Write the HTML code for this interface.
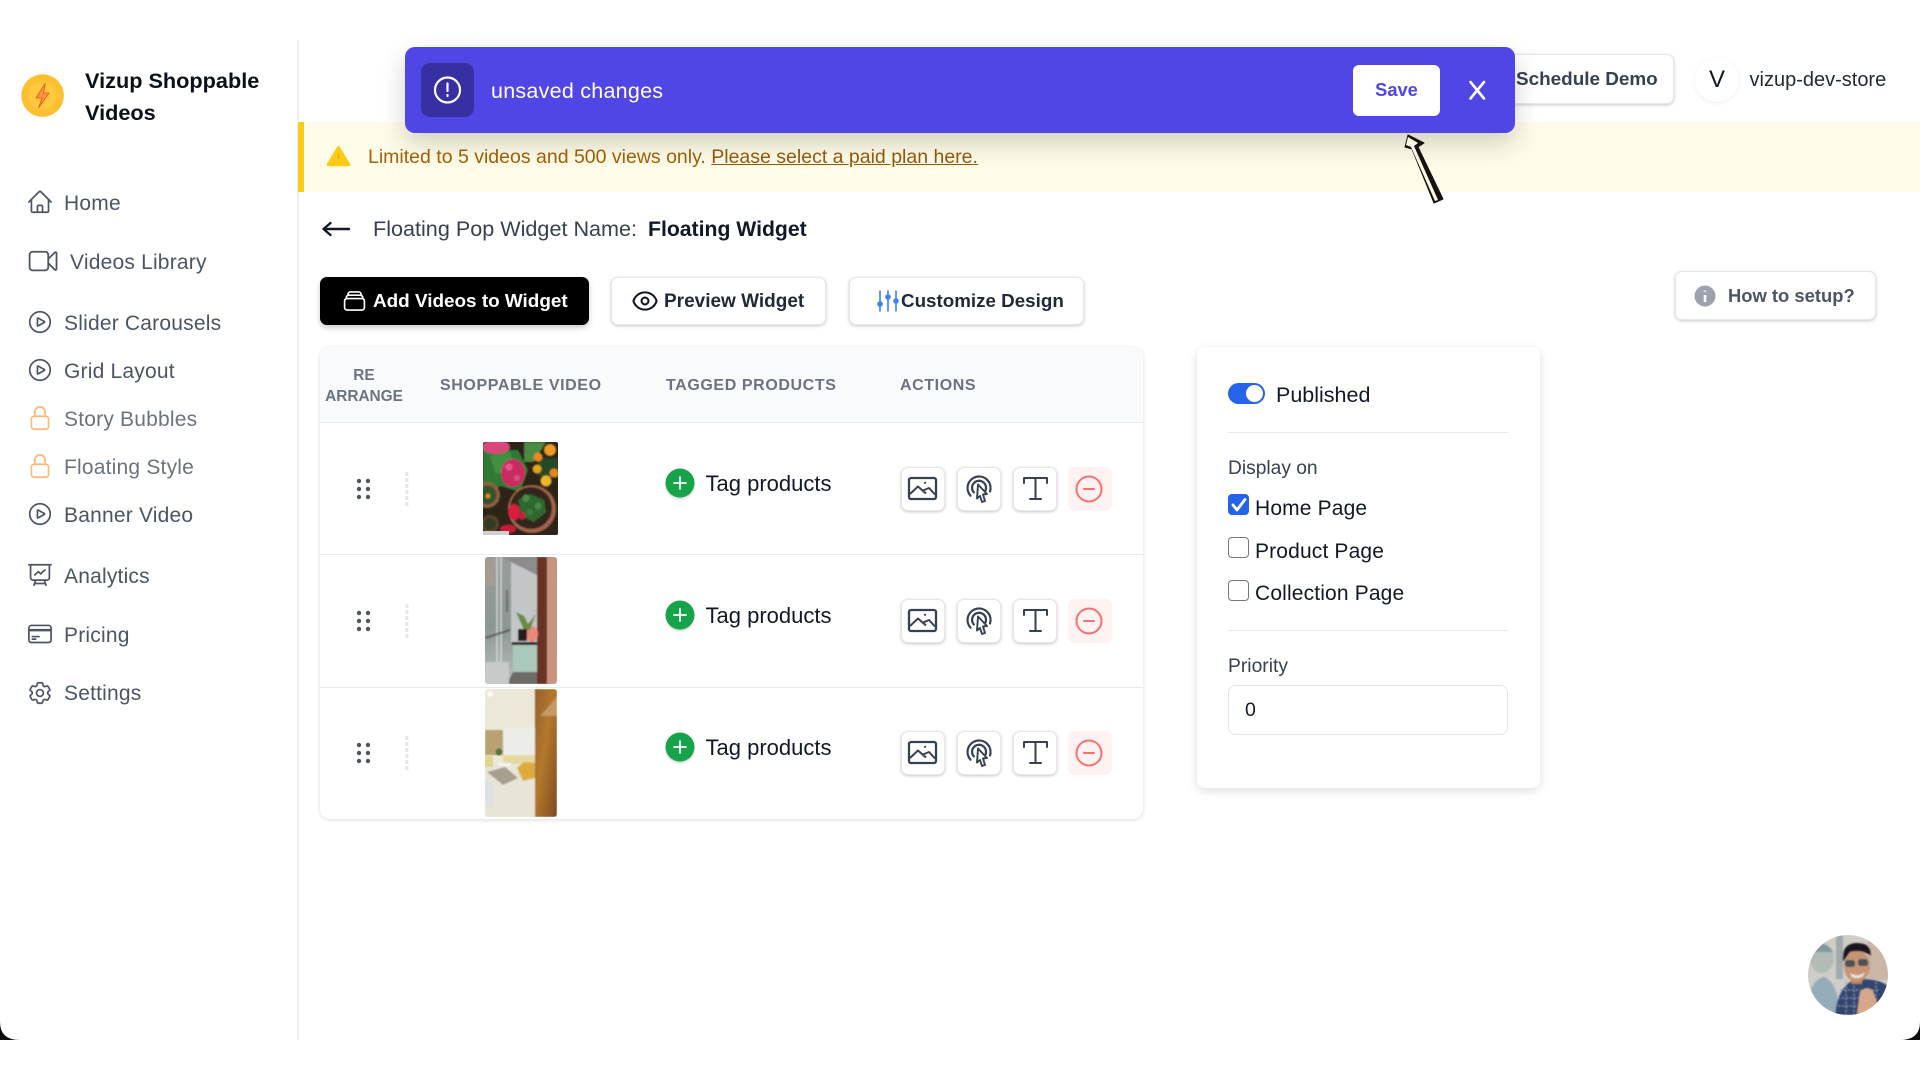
<!DOCTYPE html>
<html><head><meta charset="utf-8"><title>Vizup</title>
<style>
*{box-sizing:border-box;margin:0;padding:0}
html,body{width:1920px;height:1080px;overflow:hidden;background:#fff;font-family:"Liberation Sans",sans-serif}
body{filter:blur(.35px)}
.t{position:absolute;white-space:nowrap;line-height:30px;height:30px}
.nav{font-size:21px;color:#4b5563;left:64px;letter-spacing:.2px}
.b{position:absolute;background:#fff;border-radius:7px;border:1px solid #e5e7eb;box-shadow:0 1px 3px rgba(0,0,0,.22)}
.th{font-size:16px;font-weight:bold;color:#6b7280;letter-spacing:.6px}
.tag{font-size:22px;color:#111827;left:705.5px}
.ln{position:absolute;background:#e9eaec;height:1px}
.ck{position:absolute;left:1228px;width:21px;height:21px;border:1.5px solid #767676;border-radius:4px;background:#fff}
.lb{font-size:21px;color:#111827;left:1255px;letter-spacing:.15px}
.h{font-size:19px;font-weight:bold;color:#1f2937}
svg{position:absolute;left:0;top:0}
</style></head><body>

<div style="position:absolute;left:297px;top:40px;width:1.5px;height:1000px;background:#eeeff1"></div>
<div style="position:absolute;left:298px;top:122px;width:1622px;height:70px;background:#fefce8;border-left:6px solid #facc15"></div>

<div class="t" style="left:85px;top:65px;font-size:21.7px;font-weight:bold;color:#0b0f19;line-height:32px;height:64px">Vizup Shoppable<br>Videos</div>
<div class="t nav" style="top:188.500px">Home</div>
<div class="t nav" style="top:247.500px;left:70px">Videos Library</div>
<div class="t nav" style="top:308.500px">Slider Carousels</div>
<div class="t nav" style="top:356.500px">Grid Layout</div>
<div class="t nav" style="top:404.500px;color:#6b7280">Story Bubbles</div>
<div class="t nav" style="top:452.500px;color:#6b7280">Floating Style</div>
<div class="t nav" style="top:500.500px">Banner Video</div>
<div class="t nav" style="top:561.500px">Analytics</div>
<div class="t nav" style="top:620.500px">Pricing</div>
<div class="t nav" style="top:678.500px">Settings</div>

<div class="t" style="left:368px;top:142px;font-size:19.5px;color:#a16207">Limited to 5 videos and 500 views only. <span style="text-decoration:underline;color:#97590c">Please select a paid plan here.</span></div>

<div class="b" style="left:1480px;top:54px;width:194px;height:50px"></div>
<div class="t h" style="left:1516px;top:65px;font-size:18.9px;color:#374151">Schedule Demo</div>
<div style="position:absolute;left:1695px;top:58px;width:44px;height:44px;border-radius:50%;background:#fff;box-shadow:0 1px 4px rgba(0,0,0,.08)"></div>
<div class="t" style="left:1709px;top:65px;font-size:24px;color:#111827">V</div>
<div class="t" style="left:1749.500px;top:65px;font-size:20px;color:#1f2937">vizup-dev-store</div>

<div class="t" style="left:373px;top:214px;font-size:21.6px;color:#374151">Floating Pop Widget Name:</div>
<div class="t" style="left:648px;top:215px;font-size:21.2px;font-weight:bold;color:#111827">Floating Widget</div>

<div style="position:absolute;left:320px;top:277px;width:269px;height:48px;border-radius:7px;background:#000;box-shadow:0 3px 6px rgba(0,0,0,.2)"></div>
<div class="t" style="left:373px;top:287px;font-size:18.9px;font-weight:bold;color:#fff">Add Videos to Widget</div>
<div class="b" style="left:611px;top:277px;width:215px;height:48px"></div>
<div class="t h" style="left:664px;top:287px">Preview Widget</div>
<div class="b" style="left:849px;top:277px;width:235px;height:48px"></div>
<div class="t h" style="left:901px;top:286px;font-size:18.8px">Customize Design</div>
<div class="b" style="left:1675px;top:271px;width:201px;height:49px"></div>
<div class="t" style="left:1728px;top:281px;font-size:18.4px;color:#4b5563;font-weight:bold">How to setup?</div>

<!-- table -->
<div style="position:absolute;left:320px;top:347px;width:823px;height:472px;border-radius:10px;background:#fff;box-shadow:0 1px 4px rgba(0,0,0,.14);overflow:hidden">
  <div style="height:76px;background:#f9fafb;border-bottom:1.500px solid #e9eaec"></div>
</div>
<div class="ln" style="left:320px;top:554px;width:823px"></div>
<div class="ln" style="left:320px;top:687px;width:823px"></div>
<div class="t th" style="left:320px;width:88px;text-align:center;top:361px;font-size:15.4px;letter-spacing:0">RE</div>
<div class="t th" style="left:320px;width:88px;text-align:center;top:382px;font-size:15.4px;letter-spacing:0">ARRANGE</div>
<div class="t th" style="left:440px;top:371px">SHOPPABLE VIDEO</div>
<div class="t th" style="left:666px;top:371px">TAGGED PRODUCTS</div>
<div class="t th" style="left:900px;top:371px">ACTIONS</div>

<div class="t tag" style="top:469px">Tag products</div>
<div class="t tag" style="top:601px">Tag products</div>
<div class="t tag" style="top:733px">Tag products</div>

<div class="b" style="left:901px;top:467px;width:44px;height:44px"></div><div class="b" style="left:957px;top:467px;width:44px;height:44px"></div><div class="b" style="left:1013px;top:467px;width:44px;height:44px"></div>
<div class="b" style="left:901px;top:599px;width:44px;height:44px"></div><div class="b" style="left:957px;top:599px;width:44px;height:44px"></div><div class="b" style="left:1013px;top:599px;width:44px;height:44px"></div>
<div class="b" style="left:901px;top:731px;width:44px;height:44px"></div><div class="b" style="left:957px;top:731px;width:44px;height:44px"></div><div class="b" style="left:1013px;top:731px;width:44px;height:44px"></div>
<div style="position:absolute;left:1068px;top:467px;width:44px;height:44px;border-radius:7px;background:#fef2f2"></div>
<div style="position:absolute;left:1068px;top:599px;width:44px;height:44px;border-radius:7px;background:#fef2f2"></div>
<div style="position:absolute;left:1068px;top:731px;width:44px;height:44px;border-radius:7px;background:#fef2f2"></div>

<!-- side card -->
<div style="position:absolute;left:1197px;top:347px;width:343px;height:441px;border-radius:8px;background:#fff;box-shadow:0 3px 10px rgba(0,0,0,.13)"></div>
<div style="position:absolute;left:1228px;top:383px;width:37px;height:21px;border-radius:11px;background:#2563eb"></div>
<div style="position:absolute;left:1246px;top:385px;width:17px;height:17px;border-radius:50%;background:#fff"></div>
<div class="t" style="left:1276px;top:379.500px;font-size:21.500px;color:#111827">Published</div>
<div class="ln" style="left:1228px;top:432px;width:280px"></div>
<div class="t" style="left:1228px;top:454px;font-size:19.200px;color:#374151">Display on</div>
<div class="ck" style="top:494px;background:#2563eb;border-color:#2563eb"></div>
<div class="t lb" style="top:493.500px">Home Page</div>
<div class="ck" style="top:537px"></div>
<div class="t lb" style="top:536.500px">Product Page</div>
<div class="ck" style="top:580px"></div>
<div class="t lb" style="top:579px">Collection Page</div>
<div class="ln" style="left:1228px;top:630px;width:280px"></div>
<div class="t" style="left:1228px;top:652px;font-size:19.300px;color:#374151">Priority</div>
<div style="position:absolute;left:1228px;top:685px;width:280px;height:50px;border:1px solid #e2e4e8;border-radius:8px;background:#fff"></div>
<div class="t" style="left:1245px;top:695px;font-size:19.500px;color:#111827">0</div>

<!-- save bar -->
<div style="position:absolute;left:405px;top:47px;width:1110px;height:86px;border-radius:10px;background:#4f46e5;box-shadow:0 10px 25px rgba(0,0,0,.18)"></div>
<div style="position:absolute;left:421px;top:63px;width:53px;height:54px;border-radius:9px;background:#3730a3"></div>
<div class="t" style="left:491px;top:76px;font-size:21.500px;color:#fff;letter-spacing:.25px">unsaved changes</div>
<div style="position:absolute;left:1353px;top:65px;width:87px;height:51px;border-radius:6px;background:#fff"></div>
<div class="t" style="left:1353px;width:87px;text-align:center;top:75px;font-size:18.300px;font-weight:bold;color:#4f46e5">Save</div>

<svg width="1920" height="1080" viewBox="0 0 1920 1080" fill="none">
<defs>
<filter id="bl"><feGaussianBlur stdDeviation="0.9"/></filter>
<clipPath id="c1"><rect x="483" y="442" width="75" height="93" rx="2"/></clipPath>
<clipPath id="c2"><rect x="485" y="557" width="72" height="127" rx="3"/></clipPath>
<clipPath id="c3"><rect x="485" y="689" width="72" height="128" rx="3"/></clipPath>
<clipPath id="c4"><circle cx="1848" cy="975" r="40"/></clipPath>
<linearGradient id="wood" x1="0" y1="0" x2="1" y2="1"><stop offset="0" stop-color="#94602e"/><stop offset=".45" stop-color="#b3782c"/><stop offset="1" stop-color="#7c4a20"/></linearGradient>
<linearGradient id="glass" x1="0" y1="0" x2="0" y2="1"><stop offset="0" stop-color="#9a9d9b"/><stop offset=".55" stop-color="#8b9794"/><stop offset="1" stop-color="#b9bfbd"/></linearGradient>
<g id="play"><path d="M21 12a9 9 0 11-18 0 9 9 0 0118 0z"/><path d="M15.910 11.670a.38.38 0 010 .66l-5.600 3.110a.38.38 0 01-.56-.33V8.890a.38.38 0 01.56-.33l5.600 3.110z"/></g>
<g id="lock"><path d="M16.500 10.500V6.750a4.500 4.500 0 10-9 0v3.750m-.75 11.250h10.500a2.250 2.250 0 002.250-2.250v-6.750a2.250 2.250 0 00-2.250-2.250H6.750a2.250 2.250 0 00-2.250 2.250v6.750a2.250 2.250 0 002.250 2.250z"/></g>
<g id="row">
 <circle cx="359" cy="481" r="2.200" fill="#4b5563"/><circle cx="368" cy="481" r="2.200" fill="#4b5563"/>
 <circle cx="359" cy="489" r="2.200" fill="#4b5563"/><circle cx="368" cy="489" r="2.200" fill="#4b5563"/>
 <circle cx="359" cy="497" r="2.200" fill="#4b5563"/><circle cx="368" cy="497" r="2.200" fill="#4b5563"/>
 <path d="M407 472V506" stroke="#e5e7eb" stroke-width="3" stroke-dasharray="4 2"/>
 <circle cx="680" cy="485" r="14.500" fill="#000" opacity=".14" filter="url(#bl)"/>
 <circle cx="680" cy="483" r="14.500" fill="#16a34a"/>
 <path d="M680 477V489M674 483H686" stroke="#fff" stroke-width="1.800" stroke-linecap="round"/>
 <!-- image icon -->
 <rect x="909" y="478" width="27" height="21" rx="2" stroke="#374151" stroke-width="2.300"/>
 <path d="M910 494L918 486.500L926 493.500M923 490.500L929 488L935 494.500" stroke="#374151" stroke-width="2" stroke-linejoin="round"/>
 <circle cx="925" cy="482.800" r="1.100" fill="#374151"/>
 <!-- tap icon -->
 <path d="M970.500 495.700A11.500 11.500 0 1 1 990 491.500" stroke="#374151" stroke-width="2.200" stroke-linecap="round"/>
 <path d="M973.800 492.400A7 7 0 1 1 985.500 490.500" stroke="#374151" stroke-width="2.200" stroke-linecap="round"/>
 <path d="M978 484.500L987 494L983 494.500L985 501L982 502L980 496L977 498.500Z" stroke="#374151" stroke-width="1.900" stroke-linejoin="round" fill="#fff"/>
 <!-- T -->
 <path d="M1024 483V478H1047V483M1035.500 478V499M1030 499H1041" stroke="#374151" stroke-width="2" stroke-linecap="round" stroke-linejoin="round"/>
 <!-- minus -->
 <circle cx="1089" cy="489" r="12.500" stroke="#f87171" stroke-width="2"/>
 <path d="M1084 489H1094" stroke="#f87171" stroke-width="2" stroke-linecap="round"/>
</g>
</defs>

<!-- logo -->
<circle cx="42.600" cy="95.600" r="21.300" fill="#fbc02d"/>
<circle cx="42.600" cy="95.600" r="14" fill="#fcc93f" filter="url(#bl)"/>
<path d="M45.500 83L36 98H42L38.500 108L49 93H43.500Z" fill="#fb923c" stroke="#ea580c" stroke-width=".8"/>

<!-- sidebar icons -->
<g stroke="#4b5563" stroke-width="1.500" stroke-linecap="round" stroke-linejoin="round">
 <g transform="translate(26.300,188.300) scale(1.14)"><path d="M2.250 12l8.954-8.955c.44-.439 1.152-.439 1.591 0L21.750 12M4.500 9.750v10.125c0 .621.504 1.125 1.125 1.125H9.750v-4.875c0-.621.504-1.125 1.125-1.125h2.250c.621 0 1.125.504 1.125 1.125V21h4.125c.621 0 1.125-.504 1.125-1.125V9.750M8.250 21h8.250"/></g>
 <g transform="translate(26.500,244.500) scale(1.38)" stroke-width="1.300"><path d="M15.750 10.500l4.720-4.720a.75.75 0 011.280.53v11.380a.75.75 0 01-1.280.53l-4.720-4.720M4.500 18.750h9a2.250 2.250 0 002.250-2.250v-9a2.250 2.250 0 00-2.250-2.250h-9A2.250 2.250 0 002.250 7.500v9a2.250 2.250 0 002.250 2.250z"/></g>
 <use href="#play" transform="translate(26.300,308.300) scale(1.14)"/>
 <use href="#play" transform="translate(26.300,356.300) scale(1.14)"/>
 <use href="#play" transform="translate(26.300,500.300) scale(1.14)"/>
 <g transform="translate(26.300,561.300) scale(1.14)"><path d="M3.750 3v11.250A2.250 2.250 0 006 16.500h2.250M3.750 3h-1.500m1.500 0h16.500m0 0h1.500m-1.500 0v11.250A2.250 2.250 0 0118 16.500h-2.250m-7.500 0h7.500m-7.500 0l-1 3m8.500-3l1 3m0 0l.5 1.500m-.5-1.500h-9.500m0 0l-.5 1.500m.75-9l3-3 2.148 2.148A12.061 12.061 0 0116.500 7.605"/></g>
 <g transform="translate(26.300,620.300) scale(1.14)"><path d="M2.250 8.250h19.500M2.250 9h19.500m-16.500 5.250h6m-6 2.250h3m-3.750 3h15a2.250 2.250 0 002.250-2.250V6.750A2.250 2.250 0 0019.500 4.500h-15a2.250 2.250 0 00-2.250 2.250v10.500A2.250 2.250 0 004.500 19.500z"/></g>
 <g transform="translate(26.300,679.300) scale(1.14)"><path d="M9.594 3.940c.09-.542.56-.94 1.110-.94h2.593c.55 0 1.020.398 1.110.94l.213 1.281c.063.374.313.686.645.87.074.04.147.083.22.127.324.196.72.257 1.075.124l1.217-.456a1.125 1.125 0 011.370.49l1.296 2.247a1.125 1.125 0 01-.26 1.431l-1.003.827c-.293.24-.438.613-.431.992a6.759 6.759 0 010 .255c-.007.378.138.75.43.99l1.005.828c.424.35.534.954.26 1.430l-1.298 2.247a1.125 1.125 0 01-1.369.491l-1.217-.456c-.355-.133-.75-.072-1.076.124a6.570 6.570 0 01-.22.128c-.331.183-.581.495-.644.869l-.213 1.280c-.09.543-.56.941-1.110.941h-2.594c-.55 0-1.020-.398-1.110-.94l-.213-1.281c-.062-.374-.312-.686-.644-.87a6.520 6.520 0 01-.22-.127c-.325-.196-.72-.257-1.076-.124l-1.217.456a1.125 1.125 0 01-1.369-.49l-1.297-2.247a1.125 1.125 0 01.26-1.431l1.004-.827c.292-.24.437-.613.43-.992a6.932 6.932 0 010-.255c.007-.378-.138-.75-.43-.99l-1.004-.828a1.125 1.125 0 01-.26-1.430l1.297-2.247a1.125 1.125 0 011.370-.491l1.216.456c.356.133.751.072 1.076-.124.072-.044.146-.087.22-.128.332-.183.582-.495.644-.869l.214-1.281z"/><path d="M15 12a3 3 0 11-6 0 3 3 0 016 0z"/></g>
</g>
<g stroke="#fdba74" stroke-width="1.500" stroke-linecap="round" stroke-linejoin="round">
 <use href="#lock" transform="translate(26.300,404.300) scale(1.14)"/>
 <use href="#lock" transform="translate(26.300,452.300) scale(1.14)"/>
</g>

<!-- warning -->
<path d="M338.500 148L348.500 164.500H328.500Z" fill="#facc15" stroke="#facc15" stroke-width="3.500" stroke-linejoin="round"/>
<path d="M338.500 153V159M338.500 161.500V162.500" stroke="#eab308" stroke-width="1.800"/>

<!-- back arrow -->
<path d="M349 229H323.500M330.500 223L323.500 229L330.500 235" stroke="#111827" stroke-width="2.400" stroke-linecap="round" stroke-linejoin="round"/>

<!-- button icons -->
<g transform="translate(341.300,287.800) scale(1.1)" stroke="#fff" stroke-width="1.500" stroke-linecap="round" stroke-linejoin="round"><path d="M6 6.878V6a2.250 2.250 0 012.250-2.250h7.500A2.250 2.250 0 0118 6v.878m-12 0c.235-.083.487-.128.75-.128h10.500c.263 0 .515.045.75.128m-12 0A2.250 2.250 0 004.500 9v.878m13.500-3A2.250 2.250 0 0119.500 9v.878m0 0a2.246 2.246 0 00-.75-.128H5.250c-.263 0-.515.045-.75.128m15 0A2.250 2.250 0 0121 12v6a2.250 2.250 0 01-2.250 2.250H5.250A2.250 2.250 0 013 18v-6c0-.98.626-1.813 1.500-2.122"/></g>
<g transform="translate(631.200,287.200) scale(1.15)" stroke="#111827" stroke-width="1.800" stroke-linecap="round" stroke-linejoin="round"><path d="M2.036 12.322a1.012 1.012 0 010-.639C3.423 7.510 7.360 4.500 12 4.500c4.638 0 8.573 3.007 9.963 7.178.07.207.07.431 0 .639C20.577 16.490 16.640 19.500 12 19.500c-4.638 0-8.573-3.007-9.963-7.178z"/><path d="M15 12a3 3 0 11-6 0 3 3 0 016 0z"/></g>
<g stroke="#3b82f6" stroke-width="1.600" stroke-linecap="round">
 <path d="M880 291V311M888 291V311M896 291V311"/>
 <circle cx="880" cy="304" r="2" fill="#3b82f6"/><circle cx="888" cy="297" r="2" fill="#3b82f6"/><circle cx="896" cy="301" r="2" fill="#3b82f6"/>
</g>

<!-- info -->
<circle cx="1705" cy="296" r="10.500" fill="#9ca3af"/>
<path d="M1705 295V302M1705 290.500V291.800" stroke="#fff" stroke-width="2.600"/>

<!-- save bar icons -->
<circle cx="447.500" cy="90" r="12.500" stroke="#fff" stroke-width="2.200"/>
<path d="M447.500 83.500V91M447.500 95V96" stroke="#fff" stroke-width="2.200" stroke-linecap="round"/>
<path d="M1470.500 82L1484 98.500M1484 82L1470.500 98.500" stroke="#fff" stroke-width="2.600" stroke-linecap="round"/>

<!-- pointer -->
<path d="M1408 135L1424 143L1418 147L1443 199L1434 203L1412 149L1405 147Z" fill="#17120e" stroke="#17120e" stroke-width="1" stroke-linejoin="round"/>
<path d="M1408 137L1418 143L1414 146L1438 200L1435 201L1411 147L1406 145Z" fill="#fdf9e4"/>

<!-- rows -->
<use href="#row"/>
<use href="#row" y="132"/>
<use href="#row" y="264"/>

<!-- checkbox tick -->
<path d="M1233 505L1237 510L1245 499.500" stroke="#fff" stroke-width="2.800" stroke-linecap="round" stroke-linejoin="round"/>

<!-- video 1: plants -->
<g clip-path="url(#c1)"><rect x="483" y="442" width="75" height="93" fill="#2c2419"/>
<g filter="url(#bl)">
 <path d="M483 450L518 450L528 470L520 492L500 486L483 498Z" fill="#2f7a35"/>
 <path d="M490 456L510 452L516 470L496 474Z" fill="#428f40"/>
 <path d="M524 442L546 442L534 462L524 462Z" fill="#4c8a42"/>
 <path d="M538 458L558 458L558 478L538 476Z" fill="#274a26"/>
 <ellipse cx="496" cy="447" rx="14" ry="7" fill="#d8467a"/>
 <ellipse cx="513" cy="473" rx="12" ry="14" fill="#c92a62"/>
 <circle cx="509" cy="467" r="3.500" fill="#e35a8c"/><circle cx="517" cy="478" r="3" fill="#dd4f80"/>
 <circle cx="538" cy="457" r="4.500" fill="#e88a20"/><circle cx="550" cy="450" r="6" fill="#ef9a22"/>
 <circle cx="537" cy="469" r="4.500" fill="#e3a31f"/><circle cx="546" cy="481" r="5.500" fill="#ecb626"/><circle cx="554" cy="473" r="4.500" fill="#dc8a24"/>
 <circle cx="532" cy="509" r="24" fill="#a26448"/>
 <circle cx="531" cy="508" r="21" fill="#30281c"/>
 <path d="M518 500L530 494L544 500L546 512L534 522L522 516Z" fill="#2d682f"/>
 <circle cx="526" cy="498" r="3.500" fill="#4a8e4a"/><circle cx="538" cy="506" r="3.500" fill="#46884a"/><circle cx="530" cy="512" r="3" fill="#3c7c3e"/>
 <ellipse cx="514" cy="512" rx="6" ry="8" fill="#dc1f3c"/><circle cx="522" cy="516" r="3.500" fill="#c81f38"/>
 <circle cx="487" cy="495" r="13" fill="#8e5e3e"/><circle cx="487" cy="495" r="9.500" fill="#32522a"/><circle cx="488" cy="496" r="2.500" fill="#d9862c"/>
 <circle cx="490" cy="524" r="9" fill="#5e4028"/><circle cx="490" cy="524" r="6" fill="#2d3a22"/>
 <ellipse cx="508" cy="529" rx="8" ry="4.500" fill="#c51e38"/>
</g>
<rect x="483" y="531" width="26" height="4" fill="#cfcfcf"/></g>

<!-- video 2: bathroom -->
<g clip-path="url(#c2)"><rect x="485" y="557" width="72" height="127" fill="url(#glass)"/>
<g filter="url(#bl)">
 <rect x="511" y="557" width="26" height="85" fill="#c3c6c6"/>
 <path d="M501 557L537 575V557Z" fill="#8c8c8a"/>
 <rect x="485" y="560" width="9" height="26" fill="#a59c8e"/>
 <path d="M497 557V684M501 557V684" stroke="#d3d9d8" stroke-width="1.500"/>
 <path d="M507 590V612" stroke="#6a7070" stroke-width="2"/>
 <path d="M485 638L510 630" stroke="#67605c" stroke-width="2"/>
 <rect x="537" y="557" width="10" height="127" fill="#6b3020"/>
 <rect x="547" y="557" width="10" height="127" fill="#c9947f"/>
 <ellipse cx="532" cy="634" rx="6" ry="8" fill="#e88a7a"/>
 <path d="M516 612L524 630L530 630L536 614L528 624L524 616Z" fill="#6a8a46"/>
 <rect x="518" y="629" width="9" height="12" fill="#251c1c"/>
 <rect x="512" y="642" width="25" height="3" fill="#2a2624"/>
 <rect x="513" y="645" width="24" height="27" fill="#abc9bb"/>
 <path d="M507 684L513 672H537V684Z" fill="#6e6a66"/>
 <rect x="485" y="662" width="24" height="22" fill="#c6cac8"/>
</g></g>

<!-- video 3: living room -->
<g clip-path="url(#c3)"><rect x="485" y="689" width="72" height="128" fill="#ebe8da"/>
<g filter="url(#bl)">
 <rect x="535" y="689" width="22" height="128" fill="url(#wood)"/>
 <path d="M557 697L540 716L557 716Z" fill="#c69a64"/>
 <circle cx="490" cy="694" r="3" fill="#fbfaf4"/>
 <rect x="485" y="730" width="18" height="25" fill="#b9a272"/>
 <rect x="503" y="728" width="32" height="28" fill="#ecece8"/>
 <rect x="485" y="765" width="50" height="52" fill="#e8e4d8"/>
 <rect x="503" y="755" width="32" height="9" fill="#e5d9a2"/>
 <rect x="485" y="756" width="8" height="11" fill="#e2d48e"/>
 <path d="M487 772L505 767L518 778L503 785Z" fill="#a6a08e"/>
 <rect x="498" y="763" width="13" height="3" fill="#f5f3ee"/>
 <path d="M517 768L524 762L535 763V778L523 781Z" fill="#dcaa3c"/>
 <rect x="485" y="781" width="8" height="26" fill="#dde1e3"/>
 <circle cx="499" cy="752" r="3.500" fill="#557434"/>
</g></g>

<!-- avatar -->
<g clip-path="url(#c4)"><rect x="1808" y="935" width="80" height="80" fill="#cfcdc8"/>
<g filter="url(#bl)">
 <rect x="1836" y="935" width="7" height="44" fill="#a2a9ab"/>
 <rect x="1868" y="938" width="20" height="42" fill="#cbb5a7"/>
 <ellipse cx="1822" cy="958" rx="12" ry="15" fill="#b2bbb6"/>
 <path d="M1811 952Q1822 936 1833 952Z" fill="#7f9a9e"/>
 <path d="M1806 1015Q1808 980 1824 977Q1838 982 1840 1015Z" fill="#94adb8"/>
 <path d="M1835 1015Q1838 985 1856 979Q1878 978 1888 986V1015Z" fill="#33466f"/>
 <path d="M1840 990L1880 990M1838 998L1860 998M1838 1006L1860 1006M1846 982V1015M1854 982V1015M1876 982V1000" stroke="#8a9ab8" stroke-width="1" stroke-dasharray="2 2"/>
 <rect x="1851" y="972" width="11" height="12" fill="#b58264"/>
 <ellipse cx="1857" cy="966" rx="13" ry="16" fill="#c59575"/>
 <path d="M1843 962Q1841 943 1857 943Q1872 943 1871 956Q1862 949 1850 952Z" fill="#1c1920"/>
 <rect x="1845" y="960" width="10" height="7" rx="2.500" fill="#4b5358"/><rect x="1858" y="959" width="10" height="7" rx="2.500" fill="#4b5358"/>
 <path d="M1850 973Q1858 978 1865 972L1863 976Q1857 980 1852 977Z" fill="#f0e4dc"/>
 <path d="M1857 1014L1860 992Q1867 985 1873 991L1877 1003L1867 1014Z" fill="#d6a78a"/>
</g></g>

<!-- bottom frame corners -->
<path d="M0 1022Q0 1040 20 1040H0Z" fill="#0b0b0b"/>
<path d="M1920 1022Q1920 1040 1900 1040H1920Z" fill="#0b0b0b"/>
</svg>
</body></html>
